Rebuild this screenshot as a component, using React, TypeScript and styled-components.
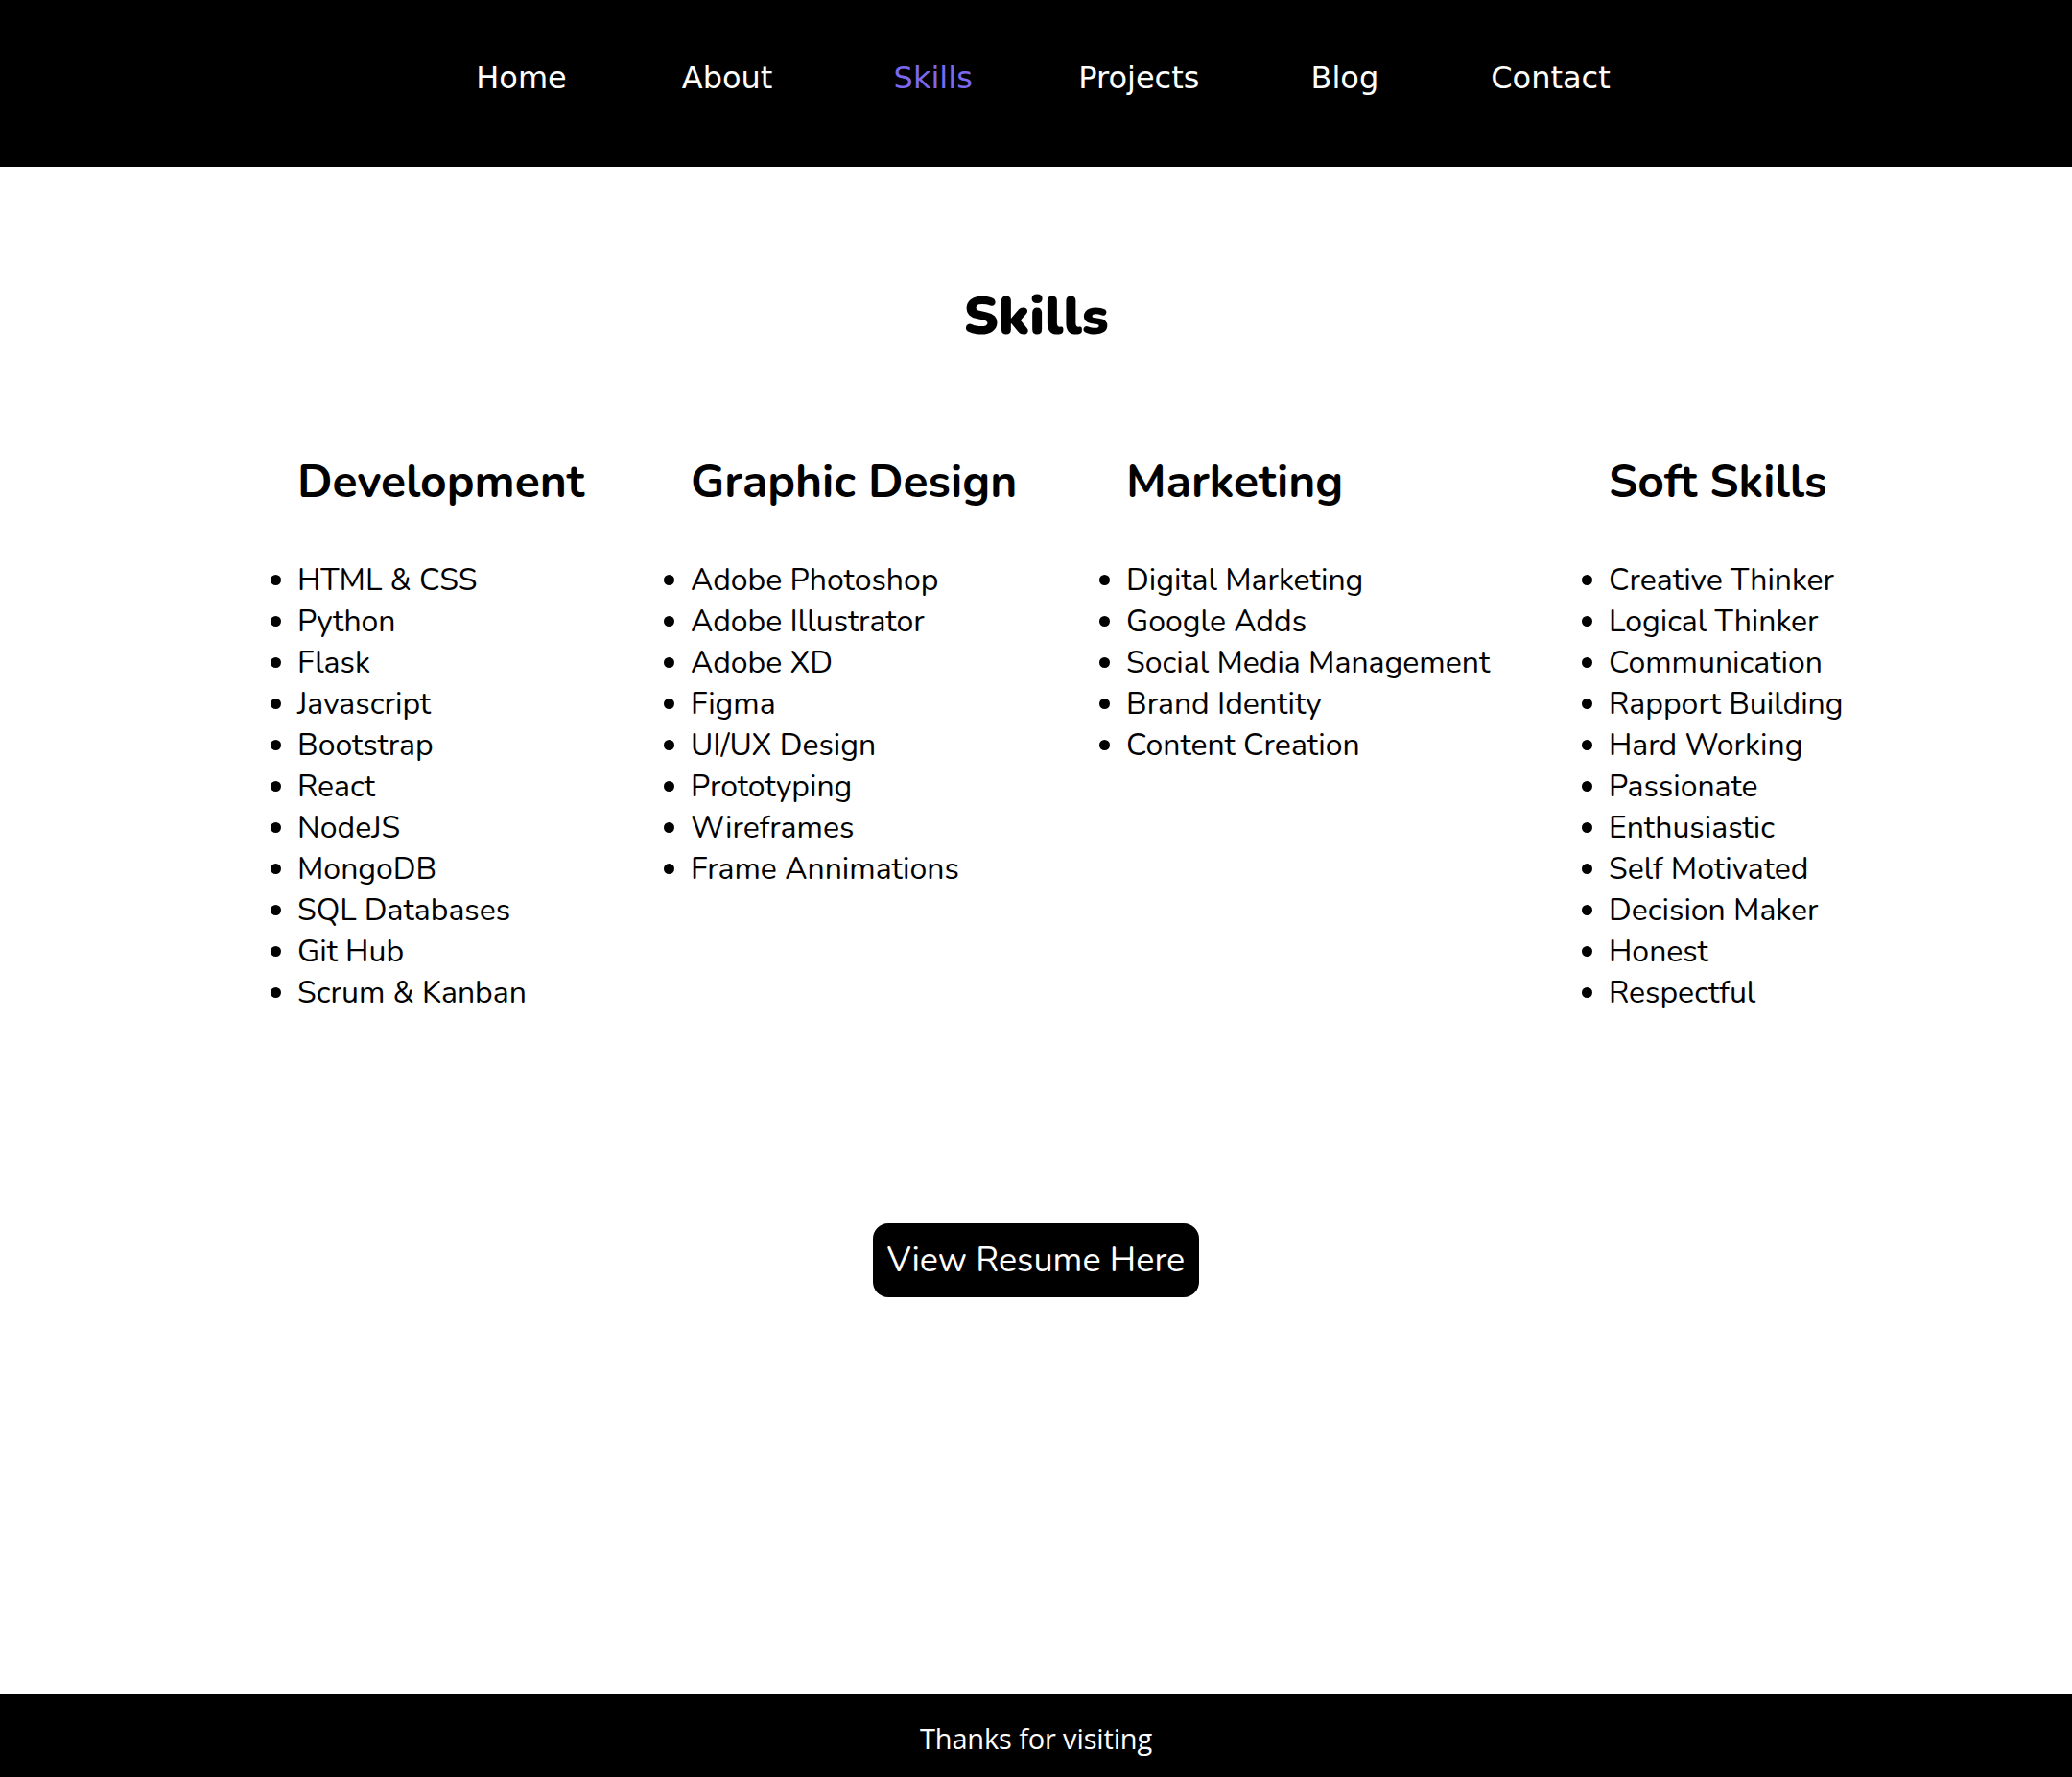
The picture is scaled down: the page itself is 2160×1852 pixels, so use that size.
import React from "react";
import styled, { createGlobalStyle } from "styled-components";

const GlobalStyle = createGlobalStyle`
  html, body {
    margin: 0;
    padding: 0;
    background: #ffffff;
  }
  body {
    font-family: "Nunito", "Lato", "Noto Sans", sans-serif;
    color: #000000;
  }
  * { box-sizing: border-box; }
`;

const Page = styled.div`
  min-height: 100vh;
  display: flex;
  flex-direction: column;
`;

const NavBar = styled.nav`
  background: #000000;
  height: 174px;
  padding-top: 62px;
  display: flex;
  justify-content: center;
  align-items: flex-start;
`;

const NavList = styled.ul`
  list-style: none;
  margin: 0;
  padding: 0;
  display: flex;
`;

const NavItem = styled.li`
  width: 214.6px;
  text-align: center;
`;

const NavLink = styled.a<{ $active?: boolean }>`
  font-family: "DejaVu Sans", sans-serif;
  font-size: 32px;
  line-height: normal;
  text-decoration: none;
  color: ${(p) => (p.$active ? "#7b68ee" : "#ffffff")};
  cursor: pointer;
`;

const Main = styled.main`
  flex: 1;
  display: flex;
  flex-direction: column;
  align-items: stretch;
  padding-top: 122px;
`;

const Title = styled.h1`
  margin: 0;
  text-align: center;
  font-size: 56px;
  line-height: 67px;
  font-weight: 900;
`;

const Columns = styled.section`
  display: grid;
  grid-template-columns: 410px 454px 503px auto;
  padding-left: 270px;
  margin-top: 110px;
`;

const Column = styled.div`
  display: flex;
  flex-direction: column;
  padding-left: 40px;
`;

const ColumnTitle = styled.h2`
  margin: 0;
  font-size: 48px;
  line-height: 58px;
  font-weight: 700;
  white-space: nowrap;
`;

const SkillList = styled.ul`
  margin: 51.6px 0 0 0;
  padding: 0;
  list-style: disc outside;
`;

const SkillItem = styled.li`
  font-size: 32px;
  line-height: 43px;
  white-space: nowrap;
`;

const ButtonRow = styled.div`
  display: flex;
  justify-content: center;
  margin-top: 219px;
`;

const ResumeButton = styled.a`
  display: inline-block;
  background: #000000;
  color: #ffffff;
  font-size: 36px;
  line-height: 49px;
  padding: 14px 15px;
  border-radius: 16px;
  text-decoration: none;
  cursor: pointer;
`;

const Footer = styled.footer`
  background: #000000;
  height: 86px;
  padding-top: 26px;
  text-align: center;
`;

const FooterText = styled.p`
  margin: 0;
  font-family: "Open Sans", "Noto Sans", sans-serif;
  font-size: 29px;
  font-weight: 500;
  line-height: 39px;
  color: #ffffff;
  letter-spacing: -0.15px;
`;

const navItems = ["Home", "About", "Skills", "Projects", "Blog", "Contact"];

const skillGroups: { title: string; items: string[] }[] = [
  {
    title: "Development",
    items: [
      "HTML & CSS",
      "Python",
      "Flask",
      "Javascript",
      "Bootstrap",
      "React",
      "NodeJS",
      "MongoDB",
      "SQL Databases",
      "Git Hub",
      "Scrum & Kanban",
    ],
  },
  {
    title: "Graphic Design",
    items: [
      "Adobe Photoshop",
      "Adobe Illustrator",
      "Adobe XD",
      "Figma",
      "UI/UX Design",
      "Prototyping",
      "Wireframes",
      "Frame Annimations",
    ],
  },
  {
    title: "Marketing",
    items: [
      "Digital Marketing",
      "Google Adds",
      "Social Media Management",
      "Brand Identity",
      "Content Creation",
    ],
  },
  {
    title: "Soft Skills",
    items: [
      "Creative Thinker",
      "Logical Thinker",
      "Communication",
      "Rapport Building",
      "Hard Working",
      "Passionate",
      "Enthusiastic",
      "Self Motivated",
      "Decision Maker",
      "Honest",
      "Respectful",
    ],
  },
];

export default function App() {
  return (
    <>
      <GlobalStyle />
      <Page>
        <NavBar>
          <NavList>
            {navItems.map((item) => (
              <NavItem key={item}>
                <NavLink $active={item === "Skills"}>{item}</NavLink>
              </NavItem>
            ))}
          </NavList>
        </NavBar>
        <Main>
          <Title>Skills</Title>
          <Columns>
            {skillGroups.map((group) => (
              <Column key={group.title}>
                <ColumnTitle>{group.title}</ColumnTitle>
                <SkillList>
                  {group.items.map((item) => (
                    <SkillItem key={item}>{item}</SkillItem>
                  ))}
                </SkillList>
              </Column>
            ))}
          </Columns>
          <ButtonRow>
            <ResumeButton>View Resume Here</ResumeButton>
          </ButtonRow>
        </Main>
        <Footer>
          <FooterText>Thanks for visiting</FooterText>
        </Footer>
      </Page>
    </>
  );
}
